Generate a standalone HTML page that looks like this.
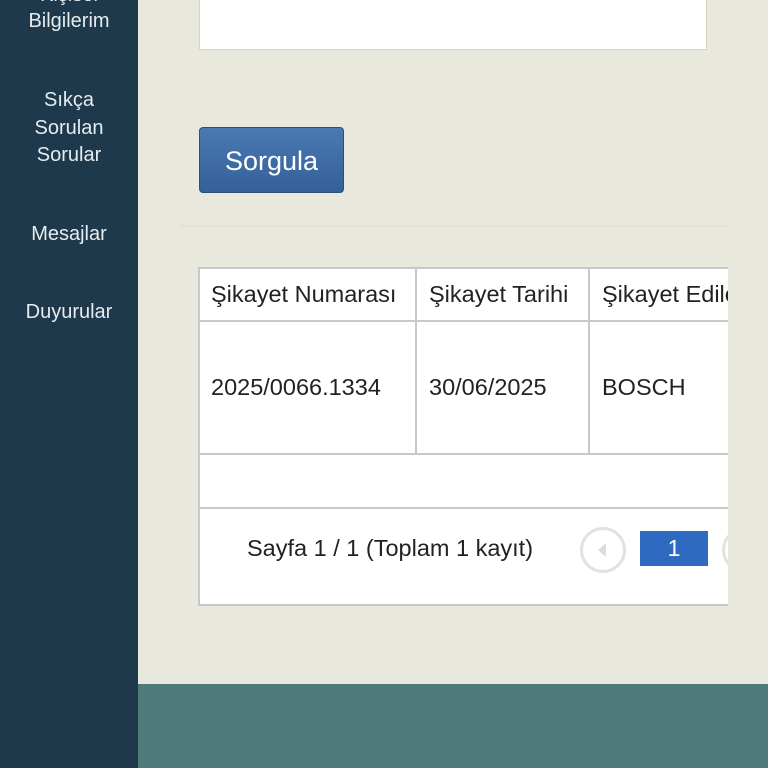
<!DOCTYPE html>
<html><head><meta charset="utf-8"><style>
body{margin:0;width:768px;height:768px;overflow:hidden;background:#e9e8dc;font-family:"Liberation Sans",sans-serif;position:relative}
.side{position:absolute;left:0;top:0;width:138px;height:768px;background:#1f394c;color:#e6ebee;font-size:20px;text-align:center;line-height:27.5px}
.side div{position:absolute;left:0;width:138px}
.box{position:absolute;left:199px;top:-10px;width:506px;height:58px;background:#fff;border:1px solid #d4d3c6}
.btn{position:absolute;left:199px;top:127px;width:143px;height:64px;border:1px solid #2b4f7c;border-radius:4px;background:linear-gradient(#4a79b2,#35609a);color:#fff;font-size:27px;text-align:center;line-height:66px}
.sep{position:absolute;left:180px;top:225px;width:548px;height:2px;background:#e2e1d4}
.tbl{position:absolute;left:198px;top:267px;width:530px;height:339px;overflow:hidden;background:#fff}
.c{position:absolute;color:#222;font-size:23.5px;white-space:nowrap}
.vl{position:absolute;width:2px;background:#c8c8c8}
.hl{position:absolute;left:0;height:2px;width:540px;background:#c8c8c8}
</style></head><body>
<div class="side">
<div style="top:-18px">Kişisel</div>
<div style="top:8px">Bilgilerim</div>
<div style="top:87px">Sıkça<br>Sorulan<br>Sorular</div>
<div style="top:221px">Mesajlar</div>
<div style="top:299px">Duyurular</div>
</div>
<div class="box"></div>
<div class="btn">Sorgula</div>
<div class="sep"></div>
<div class="tbl">
<div class="vl" style="left:0;top:0;height:339px"></div>
<div class="hl" style="top:0"></div>
<div class="hl" style="top:53px"></div>
<div class="hl" style="top:186px"></div>
<div class="hl" style="top:240px"></div>
<div class="hl" style="top:337px"></div>
<div class="vl" style="left:217px;top:0;height:188px"></div>
<div class="vl" style="left:390px;top:0;height:188px"></div>
<div class="c" style="left:13px;top:14px">Şikayet Numarası</div>
<div class="c" style="left:231px;top:14px">Şikayet Tarihi</div>
<div class="c" style="left:404px;top:14px">Şikayet Edilen</div>
<div class="c" style="left:13px;top:107px">2025/0066.1334</div>
<div class="c" style="left:231px;top:107px">30/06/2025</div>
<div class="c" style="left:404px;top:107px">BOSCH</div>
<div class="c" style="left:49px;top:268px">Sayfa 1 / 1 (Toplam 1 kayıt)</div>
<div style="position:absolute;left:382px;top:260px;width:46px;height:46px;border:3px solid #e2e2e2;border-radius:50%;box-sizing:border-box"></div>
<div style="position:absolute;left:400px;top:276px;width:0;height:0;border-top:7px solid transparent;border-bottom:7px solid transparent;border-right:8px solid #ddd"></div>
<div style="position:absolute;left:442px;top:264px;width:68px;height:35px;background:#2e6bc0;color:#fff;font-size:23px;text-align:center;line-height:35px">1</div>
<div style="position:absolute;left:524px;top:260px;width:46px;height:46px;border:3px solid #e2e2e2;border-radius:50%;box-sizing:border-box"></div>
</div>
<div style="position:absolute;left:138px;top:684px;width:630px;height:84px;background:#4e7a79"></div>
</body></html>
